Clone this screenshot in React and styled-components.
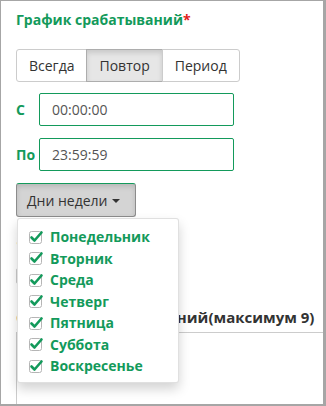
import React from "react";
import styled, { createGlobalStyle } from "styled-components";

const GREEN = "#139a5b";

const Global = createGlobalStyle`
  html, body { margin: 0; padding: 0; background: #fff; }
  body { font-family: "Open Sans", "Liberation Sans", sans-serif; }
  * { box-sizing: border-box; }
`;

const Frame = styled.div`
  width: 326px;
  height: 406px;
  overflow: hidden;
  border-top: 1px solid #a6a6a6;
  border-left: 1px solid #a6a6a6;
  border-right: 3px solid #a6a6a6;
  border-bottom: 2px solid #a6a6a6;
  padding: 9px 0 0 15px;
  position: relative;
`;

const Title = styled.div`
  font-size: 14px;
  font-weight: 700;
  color: ${GREEN};
  line-height: 20px;
  margin-bottom: 19px;
`;

const Req = styled.span`
  color: #e0201a;
`;

const Group = styled.div`
  display: inline-flex;
  margin-bottom: 11px;
`;

const SegBtn = styled.button`
  height: 33px;
  padding: 0 12px;
  font: 14px "Open Sans", "Liberation Sans", sans-serif;
  color: #333;
  background: ${(p) => (p.$active ? "#e6e6e6" : "#fff")};
  border: 1px solid ${(p) => (p.$active ? "#adadad" : "#ccc")};
  box-shadow: ${(p) => (p.$active ? "inset 0 3px 5px rgba(0,0,0,.125)" : "none")};
  margin-left: -1px;
  &:first-child { margin-left: 0; border-radius: 3px 0 0 3px; }
  &:last-child { border-radius: 0 3px 3px 0; }
`;

const Row = styled.div`
  display: flex;
  align-items: center;
  margin-bottom: 12px;
`;

const Label = styled.label`
  width: 23px;
  font-size: 14px;
  font-weight: 700;
  color: ${GREEN};
`;

const Input = styled.input`
  width: 195px;
  height: 33px;
  border: 1px solid ${GREEN};
  border-radius: 2px;
  padding: 0 12px;
  font: 14px "Open Sans", "Liberation Sans", sans-serif;
  color: #555;
  outline: none;
`;

const DropWrap = styled.div`
  position: relative;
  width: 120px;
`;

const DropBtn = styled.button`
  width: 120px;
  height: 34px;
  padding: 0 10px;
  font: 14px "Open Sans", "Liberation Sans", sans-serif;
  color: #333;
  background: #d4d4d4;
  border: 1px solid #8c8c8c;
  border-top-color: ${GREEN};
  border-radius: 3px;
  box-shadow: inset 0 3px 5px rgba(0, 0, 0, 0.125);
  display: flex;
  align-items: center;
  gap: 4px;
`;

const Caret = styled.span`
  width: 0;
  height: 0;
  border-left: 4px solid transparent;
  border-right: 4px solid transparent;
  border-top: 4px solid #333;
  margin-top: 1px;
`;

const Menu = styled.ul`
  position: absolute;
  top: 35px;
  left: 1px;
  z-index: 10;
  width: 162px;
  margin: 0;
  padding: 7px 0 5px;
  list-style: none;
  background: #fff;
  border: 1px solid rgba(0, 0, 0, 0.12);
  border-radius: 3px;
  box-shadow: 0 6px 12px rgba(0, 0, 0, 0.175);
`;

const Item = styled.li`
  display: flex;
  align-items: center;
  gap: 6px;
  height: 21.5px;
  padding-left: 10px;
  font-size: 14px;
  font-weight: 700;
  color: ${GREEN};
`;

const Below = styled.div`
  padding-top: 17px;
`;

const Muted = styled.div`
  font-size: 14px;
  color: #333;
  line-height: 20px;
  margin-bottom: 14px;
`;

const SmallBox = styled.div`
  width: 16px;
  height: 16px;
  border: 1px solid #ccc;
  border-radius: 2px;
  margin-bottom: 23px;
`;

const Heading = styled.div`
  font-size: 15px;
  font-weight: 700;
  color: #333;
  line-height: 20px;
  white-space: nowrap;
  margin-bottom: 5px;
`;

const Table = styled.div`
  height: 120px;
  border-top: 1px solid #ccc;
  border-left: 1px solid #ccc;
`;

const Check = () => (
  <svg width="16" height="16" viewBox="0 0 16 16">
    <rect x="1.5" y="2.5" width="12" height="12" rx="2" fill="#fff" stroke="#b5b5b5" />
    <path d="M3.5 8.5 L6.5 11.5 L13.5 3.5" fill="none" stroke={GREEN} strokeWidth="2.6" strokeLinecap="round" strokeLinejoin="round" />
  </svg>
);

const days = ["Понедельник", "Вторник", "Среда", "Четверг", "Пятница", "Суббота", "Воскресенье"];

export default function App() {
  return (
    <>
      <Global />
      <Frame>
        <Title>
          График срабатываний<Req>*</Req>
        </Title>
        <Group>
          <SegBtn>Всегда</SegBtn>
          <SegBtn $active>Повтор</SegBtn>
          <SegBtn>Период</SegBtn>
        </Group>
        <Row>
          <Label>С</Label>
          <Input defaultValue="00:00:00" />
        </Row>
        <Row>
          <Label>По</Label>
          <Input defaultValue="23:59:59" />
        </Row>
        <DropWrap>
          <DropBtn>
            Дни недели <Caret />
          </DropBtn>
          <Menu>
            {days.map((d) => (
              <Item key={d}>
                <Check />
                {d}
              </Item>
            ))}
          </Menu>
        </DropWrap>
        <Below>
          <Muted>• Исключения</Muted>
          <SmallBox />
          <Heading>Список дат исключений(максимум 9)</Heading>
          <Table />
        </Below>
      </Frame>
    </>
  );
}
